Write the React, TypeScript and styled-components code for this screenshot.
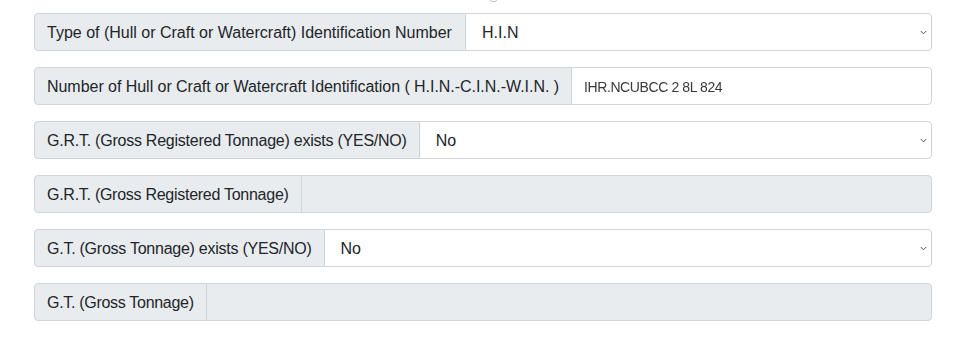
import styled, { createGlobalStyle } from 'styled-components';

const GlobalStyle = createGlobalStyle`
  * { box-sizing: border-box; }
  body {
    margin: 0;
    background: #ffffff;
    font-family: 'Liberation Sans', Arial, sans-serif;
    color: #212529;
  }
`;

const Page = styled.div`
  position: relative;
  padding: 13px 48px 0 34px;
`;

const TopMark = styled.div`
  position: absolute;
  top: -3px;
  left: 490px;
  width: 7px;
  height: 5px;
  border: 1px solid #bfc4c9;
  border-radius: 2px;
`;

const Group = styled.div`
  display: flex;
  align-items: stretch;
  height: 38px;
  margin-bottom: 16px;
`;

const Label = styled.span<{ $width: number; $tight: number }>`
  display: flex;
  align-items: center;
  flex: 0 0 ${({ $width }) => $width}px;
  padding: 1px 12px 0;
  font-size: 16px;
  line-height: 1.5;
  letter-spacing: ${({ $tight }) => $tight}px;
  white-space: nowrap;
  color: #212529;
  background: #e9ecef;
  border: 1px solid #ced4da;
  border-radius: 4px 0 0 4px;
`;

const Field = styled.div<{ $disabled?: boolean; $pad: number }>`
  position: relative;
  flex: 1;
  display: flex;
  align-items: center;
  margin-left: -1px;
  padding: 1px 36px 0 ${({ $pad }) => $pad}px;
  font-size: 16px;
  color: #212529;
  background: ${({ $disabled }) => ($disabled ? '#e9ecef' : '#ffffff')};
  border: 1px solid #ced4da;
  border-radius: 0 4px 4px 0;
`;

const Chevron = styled.svg`
  position: absolute;
  right: 4px;
  top: 50%;
  margin-top: -2px;
  width: 7px;
  height: 5px;
`;

const Hidden = styled.span`
  font-size: 14px;
  letter-spacing: -0.4px;
  color: #3a3a3a;
  filter: blur(0.6px);
`;

type Row = {
  label: string;
  width: number;
  tight: number;
  kind: 'select' | 'text' | 'disabled';
  value?: string;
};

const rows: Row[] = [
  { label: 'Type of (Hull or Craft or Watercraft) Identification Number', width: 432, tight: 0, kind: 'select', value: 'H.I.N' },
  { label: 'Number of Hull or Craft or Watercraft Identification ( H.I.N.-C.I.N.-W.I.N. )', width: 538, tight: -0.04, kind: 'text', value: 'IHR.NCUBCC 2 8L 824' },
  { label: 'G.R.T. (Gross Registered Tonnage) exists (YES/NO)', width: 385, tight: -0.24, kind: 'select', value: 'No' },
  { label: 'G.R.T. (Gross Registered Tonnage)', width: 267, tight: -0.27, kind: 'disabled' },
  { label: 'G.T. (Gross Tonnage) exists (YES/NO)', width: 290, tight: -0.25, kind: 'select', value: 'No' },
  { label: 'G.T. (Gross Tonnage)', width: 173, tight: -0.3, kind: 'disabled' },
];

const App = () => (
  <>
    <GlobalStyle />
    <Page>
      <TopMark />
      {rows.map((row) => (
        <Group key={row.label}>
          <Label $width={row.width} $tight={row.tight}>{row.label}</Label>
          <Field $disabled={row.kind === 'disabled'} $pad={row.kind === 'select' ? 16 : 12}>
            {row.kind === 'text' ? <Hidden>{row.value}</Hidden> : row.value}
            {row.kind === 'select' && (
              <Chevron viewBox="0 0 7 5">
                <path d="M0.8 1 L3.5 3.8 L6.2 1" fill="none" stroke="#555" strokeWidth="1" />
              </Chevron>
            )}
          </Field>
        </Group>
      ))}
    </Page>
  </>
);

export default App;
